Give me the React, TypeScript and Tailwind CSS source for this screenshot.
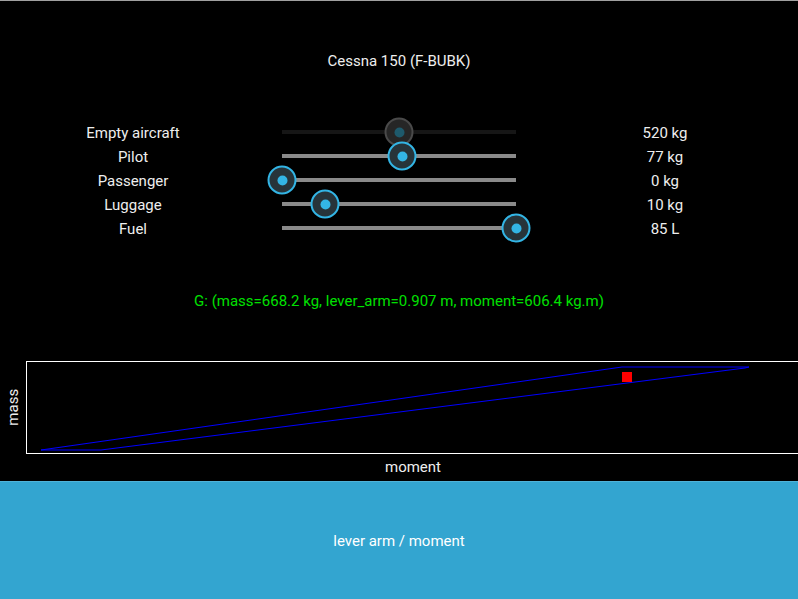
import React from 'react';

type Row = { label: string; value: string; pos: number; disabled?: boolean };

const rows: Row[] = [
  { label: 'Empty aircraft', value: '520 kg', pos: 0.5, disabled: true },
  { label: 'Pilot', value: '77 kg', pos: 0.513 },
  { label: 'Passenger', value: '0 kg', pos: 0 },
  { label: 'Luggage', value: '10 kg', pos: 0.184 },
  { label: 'Fuel', value: '85 L', pos: 1 },
];

function Slider({ pos, disabled }: { pos: number; disabled?: boolean }) {
  return (
    <div className="relative h-full mx-4">
      <div
        className={
          'absolute left-0 right-0 top-1/2 -translate-y-1/2 h-[4px] ' +
          (disabled ? 'bg-[#161616]' : 'bg-[#8a8a8a]')
        }
      />
      <div
        className={
          'absolute top-1/2 w-[29px] h-[29px] -translate-x-1/2 -translate-y-1/2 rounded-full border-2 flex items-center justify-center ' +
          (disabled ? 'border-[#4a4a4a] bg-[#262626]' : 'border-[#33b5e5] bg-[#27343a]')
        }
        style={{ left: `${pos * 100}%` }}
      >
        <div className={'w-[10px] h-[10px] rounded-full ' + (disabled ? 'bg-[#1e5a6c]' : 'bg-[#33b5e5]')} />
      </div>
    </div>
  );
}

function Chart() {
  return (
    <svg className="absolute inset-0 overflow-visible" width="100%" height="100%">
      <polyline
        points="14,88 74,88 718,6 722,5 595,5 14,88"
        fill="none"
        stroke="#0000ff"
        strokeWidth="1"
      />
      <rect x="595" y="10" width="10" height="10" fill="#ff0000" />
    </svg>
  );
}

export default function App() {
  return (
    <div
      className="w-[798px] h-[599px] bg-black text-[#eeeeee] text-[15px] overflow-hidden flex flex-col"
      style={{ fontFamily: 'Roboto, "Liberation Sans", sans-serif' }}
    >
      <div className="h-px bg-[#a0a0a0] shrink-0" />
      <div className="h-[119px] pt-[2px] flex items-center justify-center shrink-0">Cessna 150 (F-BUBK)</div>

      <div className="flex flex-col shrink-0">
        {rows.map((r) => (
          <div key={r.label} className="h-[24px] grid grid-cols-3 items-center">
            <div className="text-center pt-[2px]">{r.label}</div>
            <Slider pos={r.pos} disabled={r.disabled} />
            <div className="text-center pt-[2px]">{r.value}</div>
          </div>
        ))}
      </div>

      <div className="h-[120px] pt-[2px] flex items-center justify-center text-[#00e000] shrink-0">
        G: (mass=668.2 kg, lever_arm=0.907 m, moment=606.4 kg.m)
      </div>

      <div className="h-[121px] flex flex-col shrink-0">
        <div className="flex mt-px h-[93px]">
          <div className="w-[26px] flex items-center justify-center">
            <span className="-rotate-90 whitespace-nowrap">mass</span>
          </div>
          <div className="relative flex-1 border border-white mr-[-2px]">
            <Chart />
          </div>
        </div>
        <div className="flex-1 flex items-center justify-center pl-[28px]">moment</div>
      </div>

      <div className="flex-1 pt-[2px] bg-[#33a5d0] border-t border-[#4fb3d9] flex items-center justify-center text-white">
        lever arm / moment
      </div>
    </div>
  );
}
